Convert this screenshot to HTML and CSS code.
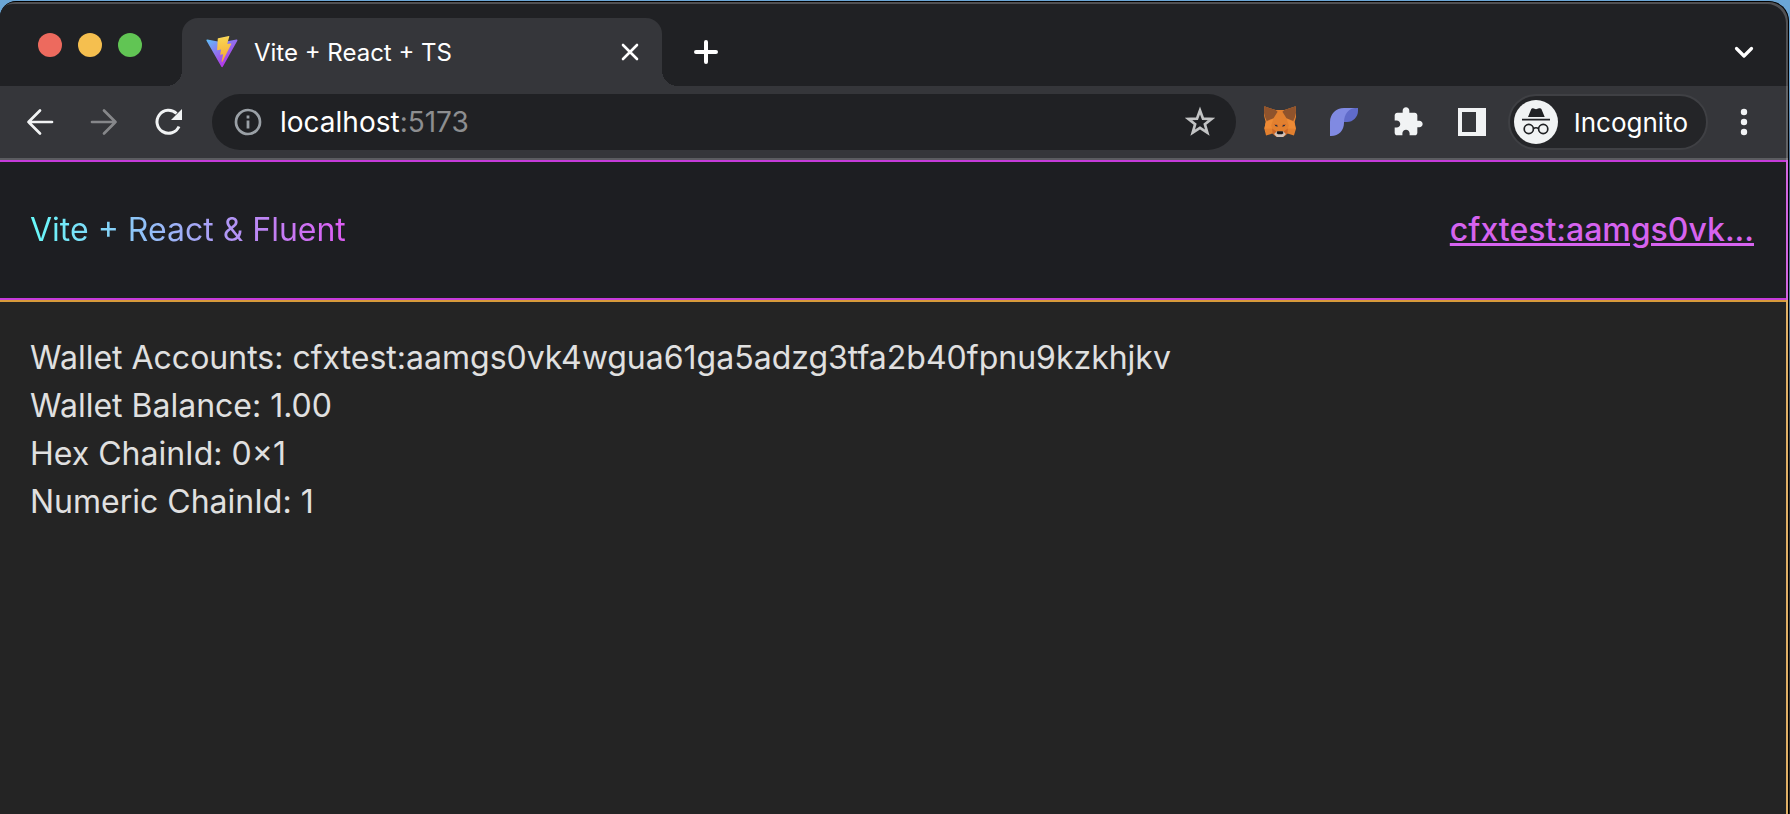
FILE: index.html
```html
<!DOCTYPE html>
<html lang="en">
<head>
<meta charset="utf-8">
<title>Vite + React + TS</title>
<link rel="stylesheet" href="styles.css">
</head>
<body>
<div class="window">
  <div class="tab-strip">
    <div class="lights">
      <button class="light light-close" aria-label="Close window"></button>
      <button class="light light-minimise" aria-label="Minimise window"></button>
      <button class="light light-zoom" aria-label="Zoom window"></button>
    </div>
    <div class="tab">
      <svg class="favicon" viewBox="4 0 404 404" aria-hidden="true">
        <defs>
          <linearGradient id="vite-body" x1="6" y1="33" x2="235" y2="344" gradientUnits="userSpaceOnUse"><stop stop-color="#5cc4fa"/><stop offset="1" stop-color="#b13be8"/></linearGradient>
          <linearGradient id="vite-bolt" x1="194" y1="9" x2="236" y2="293" gradientUnits="userSpaceOnUse"><stop stop-color="#fbdc6a"/><stop offset=".083" stop-color="#f9d350"/><stop offset="1" stop-color="#f4ac38"/></linearGradient>
        </defs>
        <path fill="url(#vite-body)" d="M399.641 59.525L215.643 388.545C211.844 395.338 202.084 395.378 198.228 388.618L10.582 59.556C6.381 52.19 12.68 43.267 21.028 44.759L205.223 77.682C206.398 77.892 207.601 77.89 208.776 77.676L389.119 44.806C397.439 43.289 403.768 52.143 399.641 59.525Z"/>
        <path fill="url(#vite-bolt)" d="M292.965 1.574L156.801 28.255C154.563 28.694 152.906 30.59 152.771 32.866L144.395 174.33C144.198 177.662 147.258 180.248 150.51 179.498L188.42 170.749C191.967 169.931 195.172 173.055 194.443 176.622L183.18 231.775C182.422 235.487 185.907 238.661 189.532 237.56L212.947 230.446C216.577 229.344 220.065 232.527 219.297 236.242L201.398 322.875C200.278 328.294 207.486 331.249 210.492 326.603L212.5 323.5L323.454 102.072C325.312 98.365 322.108 94.137 318.036 94.923L279.014 102.454C275.347 103.161 272.227 99.746 273.262 96.158L298.731 7.867C299.767 4.273 296.636 .855 292.965 1.574Z"/>
      </svg>
      <span class="tab-title">Vite + React + TS</span>
      <button class="tab-close" aria-label="Close tab">
        <svg viewBox="0 0 20 20" width="20" height="20"><path d="M3 3L17 17M17 3L3 17" fill="none" stroke="#fff" stroke-width="2.6" stroke-linecap="round"/></svg>
      </button>
    </div>
    <button class="strip-button new-tab" aria-label="New tab">
      <svg viewBox="0 0 28 28" width="28" height="28"><path d="M14 4V24M4 14H24" fill="none" stroke="#fff" stroke-width="4" stroke-linecap="round"/></svg>
    </button>
    <button class="strip-button tab-search" aria-label="Search tabs">
      <svg viewBox="0 0 24 24" width="24" height="24"><path d="M4.500 8.500L12 16L19.500 8.500" fill="none" stroke="#fff" stroke-width="3.200" stroke-linecap="round" stroke-linejoin="round"/></svg>
    </button>
  </div>

  <div class="toolbar">
    <button class="tool" aria-label="Back">
      <svg viewBox="0 0 32 32" width="32" height="32"><path d="M28 16H4.500M16 4.500L4.500 16L16 27.500" fill="none" stroke="#f1f3f4" stroke-width="2.700" stroke-linecap="round" stroke-linejoin="round"/></svg>
    </button>
    <button class="tool" aria-label="Forward">
      <svg viewBox="0 0 32 32" width="32" height="32"><path d="M4 16H27.500M16 4.500L27.500 16L16 27.500" fill="none" stroke="#86878a" stroke-width="2.700" stroke-linecap="round" stroke-linejoin="round"/></svg>
    </button>
    <button class="tool" aria-label="Reload">
      <svg viewBox="0 0 32 32" width="32" height="32"><path d="M24.500 7.500A11.500 11.500 0 1 0 27 20.500" fill="none" stroke="#f1f3f4" stroke-width="3"/><path d="M30 3V14H19Z" fill="#f1f3f4"/></svg>
    </button>
    <div class="omnibox">
      <button class="site-info" aria-label="View site information">
        <svg viewBox="0 0 28 28" width="28" height="28"><circle cx="14" cy="14" r="12" fill="none" stroke="#9aa0a6" stroke-width="2.700"/><path d="M14 12.500V20.500M14 7.500V10.500" stroke="#9aa0a6" stroke-width="2.800"/></svg>
      </button>
      <div class="url" role="textbox" aria-label="Address and search bar" tabindex="0">localhost<span class="url-port">:5173</span></div>
      <button class="bookmark" aria-label="Bookmark this tab">
        <svg viewBox="0 0 32 32" width="32" height="32"><path d="M16 4.500L19 12.600L27.600 12.900L20.900 18.300L23.300 26.600L16 21.800L8.700 26.600L11.100 18.300L4.400 12.900L13 12.600Z" fill="none" stroke="#c3c4c5" stroke-width="2.700"/></svg>
      </button>
    </div>
    <button class="tool" aria-label="MetaMask">
      <svg viewBox="42 50 94 94" width="32" height="32">
        <path d="M43 51L76 62H102L135 51L137 78L132 98L136 117L130 137L111 131L103 138L98 141H80L75 138L67 131L48 137L43 117L47 98L42 78Z" fill="#e2802f"/>
        <path d="M43 51L76 62L82 67L70 86L50 94L45 82L42 70Z" fill="#8f532c"/>
        <path d="M135 51L102 62L96 67L108 86L128 94L133 82L136 70Z" fill="#8f532c"/>
        <path d="M47 98L43 117L66 116L63 107L70 87ZM131 98L135 117L112 116L115 107L108 87Z" fill="#ed8a35"/>
        <path d="M66 116L67 131L76 135L80 126ZM112 116L111 131L102 135L98 126Z" fill="#cc6728"/>
        <path d="M71 103L81 104L84 111L75 108ZM107 103L97 104L94 111L103 108Z" fill="#c25c29"/>
        <path d="M74 106H80L82 111L75 109ZM104 106H98L96 111L103 109Z" fill="#263442"/>
        <path d="M72 132L79 125H99L106 132L98 141H80Z" fill="#d3c3ba"/>
        <path d="M81 124H97L99 130L95 133H83L79 130Z" fill="#15161a"/>
      </svg>
    </button>
    <button class="tool" aria-label="Fluent">
      <svg viewBox="0 0 28 28" width="28" height="28"><path d="M0 28V14C0 6 6 0 14 0H25L20 10L14 14V15C14 22 9 28 1 28Z" fill="#808ae2"/><path d="M28 0H26C19 0 14 6 14 14H17C23 14 28 9 28 3Z" fill="#606bc9"/></svg>
    </button>
    <button class="tool" aria-label="Extensions">
      <svg viewBox="0 0 24 24" width="32" height="32"><path fill="#f1f3f4" d="M20.500 11H19V7c0-1.100-.9-2-2-2h-4V3.500C13 2.120 11.880 1 10.500 1S8 2.120 8 3.500V5H4c-1.100 0-1.990.9-1.990 2v3.800H3.500c1.490 0 2.700 1.210 2.700 2.700s-1.210 2.700-2.700 2.700H2V20c0 1.100.9 2 2 2h3.800v-1.500c0-1.490 1.210-2.700 2.700-2.700s2.700 1.210 2.700 2.700V22H17c1.100 0 2-.9 2-2v-4h1.500c1.380 0 2.500-1.120 2.500-2.500S21.880 11 20.500 11z"/></svg>
    </button>
    <button class="tool" aria-label="Side panel">
      <svg viewBox="0 0 28 28" width="28" height="28"><path fill="#f1f3f4" fill-rule="evenodd" d="M0 0H28V28H0ZM4 4V24H18V4Z"/></svg>
    </button>
    <button class="profile">
      <svg viewBox="0 0 44 44" width="44" height="44" aria-hidden="true">
        <circle cx="22" cy="22" r="22" fill="#f1f3f4"/>
        <path d="M14 17L17.300 9Q18 8 19 8.300L22 9.200L25 8.300Q27 8 27.400 9L30.700 17Z" fill="#202124"/>
        <path d="M8 19.700H36" stroke="#202124" stroke-width="1.800"/>
        <g fill="none" stroke="#202124" stroke-width="1.700"><circle cx="14.800" cy="29" r="4.600"/><circle cx="29.200" cy="29" r="4.600"/><path d="M19.400 28.500Q22 27 24.600 28.500"/></g>
      </svg>
      <span>Incognito</span>
    </button>
    <button class="tool" aria-label="Menu">
      <svg viewBox="0 0 32 32" width="32" height="32"><g fill="#f1f3f4"><circle cx="16" cy="6" r="3.200"/><circle cx="16" cy="16" r="3.200"/><circle cx="16" cy="26" r="3.200"/></g></svg>
    </button>
  </div>

  <header class="app-header">
    <span class="brand">Vite + React &amp; Fluent</span>
    <a class="account" href="#account">cfxtest:aamgs0vk...</a>
  </header>
  <main class="app-main">
    <p>Wallet Accounts: cfxtest:aamgs0vk4wgua61ga5adzg3tfa2b40fpnu9kzkhjkv</p>
    <p>Wallet Balance: 1.00</p>
    <p>Hex ChainId: 0×1</p>
    <p>Numeric ChainId: 1</p>
  </main>
</div>
</body>
</html>
```
FILE: styles.css
```css
* {
  box-sizing: border-box;
}

body {
  display: flex;
  min-height: 100vh;
  margin: 0;
  padding: 1px 1px 0 0;
  background: linear-gradient(#6ba6d6 0, #6ba6d6 80px, #3d5a78 180px, #5b7f9f 300px, #2b3038 480px, #3a3024 100%);
  font-family: Inter, "Liberation Sans", sans-serif;
  font-optical-sizing: none;
}

button {
  display: flex;
  align-items: center;
  justify-content: center;
  padding: 0;
  border: 0;
  background: none;
  color: inherit;
  font: inherit;
}

.window {
  position: relative;
  display: flex;
  flex: 1;
  flex-direction: column;
  min-width: 0;
  overflow: hidden;
  border: solid #000;
  border-width: 1px 1px 0 0;
  border-radius: 16px 20px 0 0;
  background: #242424;
}

/* Light rim that lies over the window's edge */
.window::after {
  position: absolute;
  inset: 0;
  border-radius: 15px 19px 0 0;
  box-shadow: inset -2px 2px rgb(255 255 255 / 22%);
  content: "";
  pointer-events: none;
}

.tab-strip {
  display: flex;
  align-items: flex-end;
  height: 84px;
  padding-right: 12px;
  background: #202124;
}

.lights {
  display: flex;
  align-items: center;
  gap: 16px;
  width: 182px;
  height: 82px;
  padding-left: 38px;
}

.light {
  width: 24px;
  height: 24px;
  border-radius: 50%;
}

.light-close {
  background: #ed6a5e;
}

.light-minimise {
  background: #f5bf4f;
}

.light-zoom {
  background: #61c554;
}

.tab {
  position: relative;
  display: flex;
  align-items: center;
  width: 480px;
  height: 68px;
  padding: 0 22px 0 24px;
  border-radius: 16px 16px 0 0;
  background: #35363a;
}

.tab::before,
.tab::after {
  position: absolute;
  bottom: 0;
  width: 16px;
  height: 16px;
  content: "";
}

.tab::before {
  right: 100%;
  background: radial-gradient(circle at 0 0, transparent 16px, #35363a 16px);
}

.tab::after {
  left: 100%;
  background: radial-gradient(circle at 100% 0, transparent 16px, #35363a 16px);
}

.favicon {
  width: 32px;
  height: 32px;
}

.tab-title {
  flex: 1;
  margin-left: 16px;
  color: #fff;
  font-size: 24px;
}

.strip-button {
  width: 64px;
  height: 68px;
}

.new-tab {
  margin-left: 12px;
}

.tab-search {
  margin-left: auto;
}

.toolbar {
  display: flex;
  align-items: center;
  height: 74px;
  padding: 0 12px 0 8px;
  border-bottom: 2px solid #5b5c60;
  background: #35363a;
}

.tool {
  width: 64px;
  height: 56px;
}

.omnibox {
  display: flex;
  flex: 1;
  align-items: center;
  height: 56px;
  margin: 0 12px;
  padding: 0 20px 0 22px;
  border-radius: 28px;
  background: #202124;
}

.url {
  flex: 1;
  margin-left: 18px;
  color: #fff;
  font-size: 28px;
}

.url-port {
  color: #8d8e90;
}

.profile {
  gap: 16px;
  height: 56px;
  margin: 0 4px;
  padding: 0 18px 0 4px;
  border: 2px solid #3f4044;
  border-radius: 28px;
  background: #242528;
  color: #fff;
  font-size: 26px;
}

.app-header {
  display: flex;
  align-items: center;
  justify-content: space-between;
  height: 140px;
  padding: 0 32px 0 30px;
  border: solid #c53bda;
  border-width: 2px 2px 2px 0;
  background: #1d1e22;
  font-size: 32px;
  line-height: 48px;
}

.brand {
  background: linear-gradient(to right, #67fafa, #dd5cf3);
  background-clip: text;
  color: transparent;
}

.account {
  color: #d663ef;
  font-weight: 500;
}

.app-main {
  flex: 1;
  padding: 32px 32px 32px 30px;
  border: solid #d89a3b;
  border-width: 2px 2px 0 0;
  background: #242424;
  color: #e0e0e0;
  font-size: 32px;
  line-height: 48px;
}

.app-main p {
  margin: 0;
}
```
